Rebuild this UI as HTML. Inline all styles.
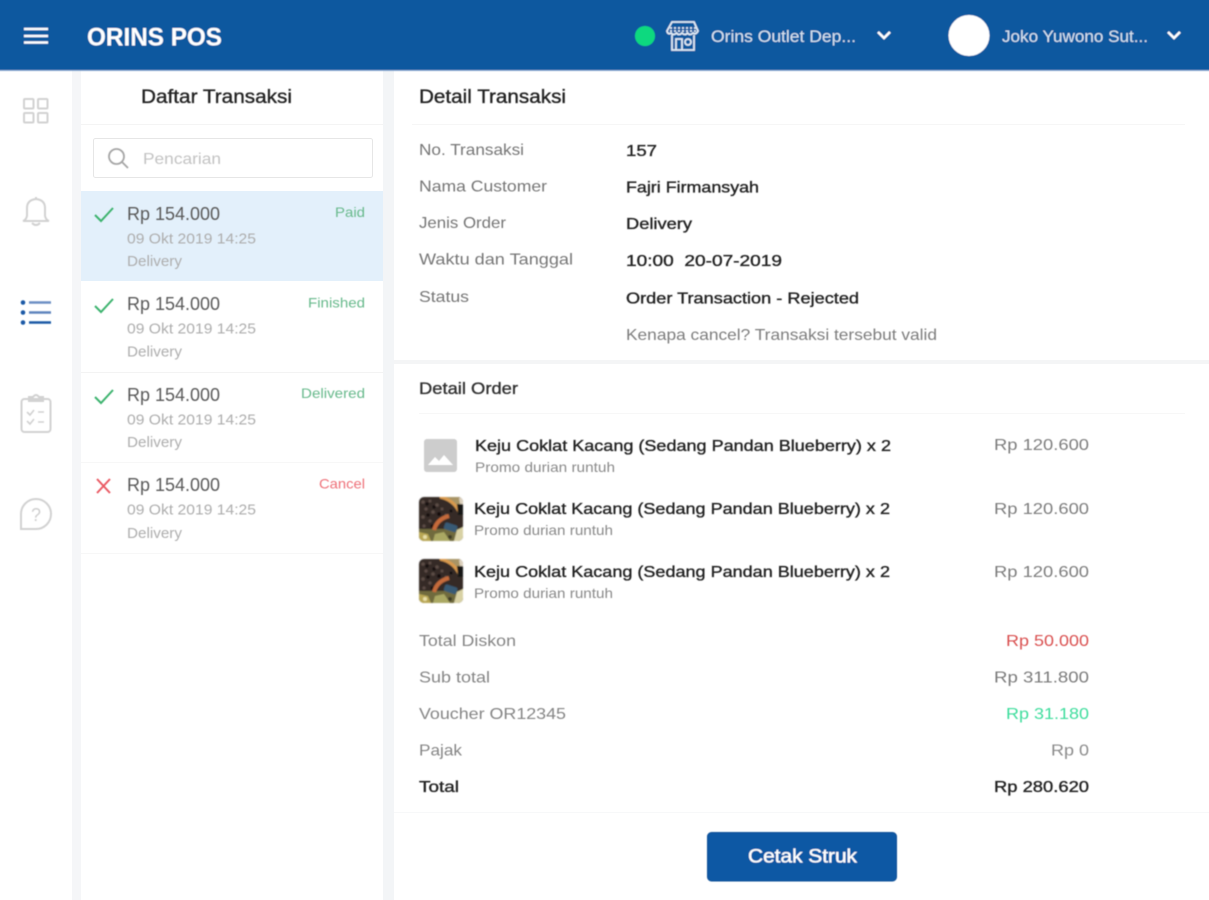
<!DOCTYPE html>
<html><head><meta charset="utf-8"><title>Orins POS</title>
<style>
html,body{margin:0;padding:0;background:#fff;width:1209px;height:900px;overflow:hidden}
svg{display:block;position:absolute;left:0;top:0}
text{font-family:"Liberation Sans",sans-serif}
.m{stroke:currentColor;stroke-width:.35}
</style></head><body>
<svg width="1209" height="900" viewBox="0 0 1209 900" xmlns="http://www.w3.org/2000/svg">
<defs><filter id="b" x="-2%" y="-2%" width="104%" height="104%"><feGaussianBlur stdDeviation="0.55"/></filter>
<filter id="p" x="-5%" y="-5%" width="110%" height="110%"><feGaussianBlur stdDeviation="0.8"/></filter>
<clipPath id="c"><rect x="0" y="0" width="44" height="44" rx="5"/></clipPath>
<g id="ph"><g clip-path="url(#c)">
<rect width="44" height="44" fill="#342a26"/>
<rect x="0" y="32" width="44" height="12" fill="#6f6a3c"/>
<path d="M0 35l9 2 3 7H0z" fill="#b8a652"/>
<path d="M20 0h24v10l-4 8q-4-12-20-18z" fill="#a89465"/>
<path d="M21 0q15 3 20 17" fill="none" stroke="#d99a4e" stroke-width="3"/>
<path d="M38 7h6v11h-5z" fill="#121317"/>
<path d="M40 1h4v6h-3z" fill="#ddd2bf"/>
<g fill="#5b4c44"><circle cx="4" cy="5" r="1.800"/><circle cx="11" cy="4" r="1.500"/><circle cx="18" cy="8" r="1.800"/><circle cx="7" cy="12" r="1.600"/><circle cx="14" cy="15" r="1.800"/><circle cx="23" cy="12" r="1.500"/><circle cx="4" cy="20" r="1.800"/><circle cx="11" cy="24" r="1.600"/><circle cx="27" cy="18" r="1.400"/><circle cx="5" cy="29" r="1.600"/></g>
<g fill="#17110f"><circle cx="8" cy="7" r="1.700"/><circle cx="15" cy="10" r="1.700"/><circle cx="20" cy="17" r="2"/><circle cx="9" cy="18" r="1.800"/><circle cx="32" cy="14" r="1.600"/><circle cx="13" cy="29" r="1.600"/></g>
<path d="M15 33q3-11 15-14" fill="none" stroke="#c56a3a" stroke-width="4"/>
<rect x="25" y="27" width="13" height="7" rx="2" fill="#385a74" transform="rotate(18 32 31)"/>
<path d="M38 33l6-3v14h-9z" fill="#d8d1a4"/>
<path d="M16 37l9-2 6 9H14z" fill="#aaa864"/>
<circle cx="31" cy="40" r="2" fill="#3c3a26"/><circle cx="6" cy="40" r="2" fill="#e8dfa8"/>
</g></g></defs>

<rect width="1209" height="900" fill="#fff"/>
<rect x="72" y="70" width="9" height="830" fill="#f5f6f8"/>
<rect x="383" y="70" width="11" height="830" fill="#f3f5f7"/>
<rect x="81" y="191" width="302" height="90" fill="#e3f0fb"/>
<rect x="81" y="124" width="302" height="1" fill="#f4f4f4"/>
<rect x="81" y="372" width="302" height="1" fill="#f3f3f3"/>
<rect x="81" y="462" width="302" height="1" fill="#f7f7f7"/>
<rect x="81" y="553" width="302" height="1" fill="#f7f7f7"/>
<rect x="412" y="124" width="773" height="1" fill="#f6f6f6"/>
<rect x="394" y="360" width="815" height="4" fill="#f4f5f6"/>
<rect x="419" y="413" width="766" height="1" fill="#f7f7f7"/>
<rect x="394" y="812" width="815" height="1" fill="#f7f8f9"/>
<rect x="93.500" y="138.500" width="279" height="39" rx="2" fill="#fff" stroke="#e6e6e6"/>

<g filter="url(#b)">
<rect x="-5" y="-5" width="1219" height="75" fill="#10599f"/>
<rect x="-5" y="70" width="1219" height="1" fill="#8fb0d6"/>
<path d="M24 29h24M24 36h24M24 42.500h24" stroke="#fff" stroke-width="2.600"/>
<text x="87" y="45.500" font-size="25" font-weight="700" fill="#fff" textLength="135" lengthAdjust="spacingAndGlyphs">ORINS POS</text>
<circle cx="645" cy="36" r="10" fill="#10d97f"/>
<g fill="none" stroke="#dfe9f4" stroke-width="1.800">
<path d="M672 22h22l4 9q-2 4-5 2-3 3-5.500 0-2.500 3-5.500 0-3 3-5.500 0-3 3-5.500 0-3 2-4-2z"/>
<path d="M672 35v15h22V35"/>
<path d="M676 50V39h6v11"/><circle cx="688" cy="42" r="3"/>
<path d="M670 28h26M670 31h26" stroke-dasharray="2 2"/>
</g>
<text x="711" y="42" font-size="16.500" fill="#d5e2f0" textLength="145" lengthAdjust="spacingAndGlyphs">Orins Outlet Dep...</text>
<path d="M878 32l6 6 6-6" fill="none" stroke="#fff" stroke-width="2.500"/>
<circle cx="969" cy="35.500" r="20.500" fill="#fff"/>
<text x="1002" y="42" font-size="16.500" fill="#d5e2f0" textLength="146" lengthAdjust="spacingAndGlyphs">Joko Yuwono Sut...</text>
<path d="M1168 32l6 6 6-6" fill="none" stroke="#fff" stroke-width="2.500"/>

<g fill="none" stroke="#d2d2d2" stroke-width="2">
<rect x="24" y="99" width="9.500" height="9.500" rx="1"/><rect x="38" y="99" width="9.500" height="9.500" rx="1"/>
<rect x="24" y="113" width="9.500" height="9.500" rx="1"/><rect x="38" y="113" width="9.500" height="9.500" rx="1"/>
<path d="M23 221h26q-3-1-4-5v-8q0-8-9-9-9 1-9 9v8q-1 4-4 5zM36 199v-2M32 223q4 4 8 0"/>
<rect x="21.500" y="399" width="29" height="33" rx="3"/><path d="M29 401v-4h4q3-4 6 0h4v4z"/>
<path d="M27 412l3 3 4-5M38 412h6M27 421l3 3 4-5M38 422h6" stroke-width="1.600"/>
<path d="M21 529V514a15 15 0 1 1 15 15z"/>
</g>
<text x="31" y="521" font-size="18" fill="#cfcfcf">?</text>
<g fill="#1d5aa6"><circle cx="23" cy="302.500" r="2.300"/><circle cx="23" cy="312.500" r="2.300"/><circle cx="23" cy="322.500" r="2.300"/></g>
<path d="M29 302.500h22" stroke="#6d8fc4" stroke-width="2.400"/><path d="M29 312.500h22" stroke="#5f84bd" stroke-width="2.400"/><path d="M29 322.500h22" stroke="#1d5aa6" stroke-width="2.400"/>

<text x="141" y="103" font-size="19" fill="#222" color="#222" class="m" textLength="151" lengthAdjust="spacingAndGlyphs">Daftar Transaksi</text>
<circle cx="116.500" cy="156.500" r="7.500" fill="none" stroke="#a5a5a5" stroke-width="1.800"/><path d="M122 162l6 6" stroke="#a5a5a5" stroke-width="1.800"/>
<text x="143" y="164" font-size="16" fill="#c2c2c2" textLength="78" lengthAdjust="spacingAndGlyphs">Pencarian</text>

<path d="M95 215l6 6 12-13" fill="none" stroke="#3db36e" stroke-width="2"/>
<path d="M95 306l6 6 12-13" fill="none" stroke="#3db36e" stroke-width="2"/>
<path d="M95 397l6 6 12-13" fill="none" stroke="#3db36e" stroke-width="2"/>
<path d="M97 479l13 14M110 479l-13 14" fill="none" stroke="#ea5a64" stroke-width="2"/>

<g fill="#5a5a5a" font-size="18">
<text x="127" y="220" textLength="93" lengthAdjust="spacingAndGlyphs">Rp 154.000</text>
<text x="127" y="310" textLength="93" lengthAdjust="spacingAndGlyphs">Rp 154.000</text>
<text x="127" y="401" textLength="93" lengthAdjust="spacingAndGlyphs">Rp 154.000</text>
<text x="127" y="491" textLength="93" lengthAdjust="spacingAndGlyphs">Rp 154.000</text>
</g>
<g fill="#adadad" font-size="15">
<text x="127" y="243.500" textLength="129" lengthAdjust="spacingAndGlyphs">09 Okt 2019 14:25</text>
<text x="127" y="333.500" textLength="129" lengthAdjust="spacingAndGlyphs">09 Okt 2019 14:25</text>
<text x="127" y="424.500" textLength="129" lengthAdjust="spacingAndGlyphs">09 Okt 2019 14:25</text>
<text x="127" y="514.500" textLength="129" lengthAdjust="spacingAndGlyphs">09 Okt 2019 14:25</text>
<text x="127" y="266" textLength="55" lengthAdjust="spacingAndGlyphs">Delivery</text>
<text x="127" y="356.500" textLength="55" lengthAdjust="spacingAndGlyphs">Delivery</text>
<text x="127" y="447" textLength="55" lengthAdjust="spacingAndGlyphs">Delivery</text>
<text x="127" y="538" textLength="55" lengthAdjust="spacingAndGlyphs">Delivery</text>
</g>
<g font-size="14" fill="#68b98c">
<text x="335" y="217" textLength="30" lengthAdjust="spacingAndGlyphs">Paid</text>
<text x="308" y="307.500" textLength="57" lengthAdjust="spacingAndGlyphs">Finished</text>
<text x="301" y="398" textLength="64" lengthAdjust="spacingAndGlyphs">Delivered</text>
<text x="319" y="488.500" fill="#ee7078" textLength="46" lengthAdjust="spacingAndGlyphs">Cancel</text>
</g>

<text x="419" y="103" font-size="19" fill="#222" color="#222" class="m" textLength="147" lengthAdjust="spacingAndGlyphs">Detail Transaksi</text>
<g font-size="16" fill="#767676">
<text x="419" y="155" textLength="105" lengthAdjust="spacingAndGlyphs">No. Transaksi</text>
<text x="419" y="191.500" textLength="128" lengthAdjust="spacingAndGlyphs">Nama Customer</text>
<text x="419" y="228" textLength="87" lengthAdjust="spacingAndGlyphs">Jenis Order</text>
<text x="419" y="264.500" textLength="154" lengthAdjust="spacingAndGlyphs">Waktu dan Tanggal</text>
<text x="419" y="302" textLength="50" lengthAdjust="spacingAndGlyphs">Status</text>
</g>
<g font-size="16" fill="#222" color="#222" class="m">
<text x="626" y="156" textLength="31" lengthAdjust="spacingAndGlyphs">157</text>
<text x="626" y="192.500" textLength="133" lengthAdjust="spacingAndGlyphs">Fajri Firmansyah</text>
<text x="626" y="229" textLength="66" lengthAdjust="spacingAndGlyphs">Delivery</text>
<text x="626" y="266" textLength="156" lengthAdjust="spacingAndGlyphs" xml:space="preserve">10:00  20-07-2019</text>
<text x="626" y="303.500" textLength="233" lengthAdjust="spacingAndGlyphs">Order Transaction - Rejected</text>
</g>
<text x="626" y="340" font-size="16" fill="#7d7d7d" textLength="311" lengthAdjust="spacingAndGlyphs">Kenapa cancel? Transaksi tersebut valid</text>
<text x="419" y="394" font-size="16.500" fill="#333" color="#333" class="m" textLength="99" lengthAdjust="spacingAndGlyphs">Detail Order</text>

<g font-size="16" fill="#222" color="#222" class="m">
<text x="475" y="451" textLength="416" lengthAdjust="spacingAndGlyphs">Keju Coklat Kacang (Sedang Pandan Blueberry) x 2</text>
<text x="474" y="514" textLength="416" lengthAdjust="spacingAndGlyphs">Keju Coklat Kacang (Sedang Pandan Blueberry) x 2</text>
<text x="474" y="577" textLength="416" lengthAdjust="spacingAndGlyphs">Keju Coklat Kacang (Sedang Pandan Blueberry) x 2</text>
</g>
<g font-size="14" fill="#8a8a8a">
<text x="475" y="472" textLength="140" lengthAdjust="spacingAndGlyphs">Promo durian runtuh</text>
<text x="474" y="535" textLength="139" lengthAdjust="spacingAndGlyphs">Promo durian runtuh</text>
<text x="474" y="598" textLength="139" lengthAdjust="spacingAndGlyphs">Promo durian runtuh</text>
</g>
<g font-size="16" fill="#7d7d7d">
<text x="994" y="450" textLength="95" lengthAdjust="spacingAndGlyphs">Rp 120.600</text>
<text x="994" y="514" textLength="95" lengthAdjust="spacingAndGlyphs">Rp 120.600</text>
<text x="994" y="577" textLength="95" lengthAdjust="spacingAndGlyphs">Rp 120.600</text>
</g>
<rect x="424" y="439" width="33" height="33" rx="3" fill="#cdcdcd"/>
<path d="M428 465l7-8 4 4 5-6 9 10z" fill="#fff"/>

<g font-size="16" fill="#858585">
<text x="419" y="646" textLength="97" lengthAdjust="spacingAndGlyphs">Total Diskon</text>
<text x="419" y="682.500" textLength="71" lengthAdjust="spacingAndGlyphs">Sub total</text>
<text x="419" y="719" textLength="147" lengthAdjust="spacingAndGlyphs">Voucher OR12345</text>
<text x="419" y="755.500" textLength="43" lengthAdjust="spacingAndGlyphs">Pajak</text>
</g>
<text x="419" y="792" font-size="16" fill="#222" color="#222" class="m" textLength="40" lengthAdjust="spacingAndGlyphs">Total</text>
<g font-size="16">
<text x="1006" y="646" fill="#d9504f" textLength="83" lengthAdjust="spacingAndGlyphs">Rp 50.000</text>
<text x="994" y="682.500" fill="#7a7a7a" textLength="95" lengthAdjust="spacingAndGlyphs">Rp 311.800</text>
<text x="1006" y="719" fill="#3edd9c" textLength="83" lengthAdjust="spacingAndGlyphs">Rp 31.180</text>
<text x="1051" y="755.500" fill="#8a8a8a" textLength="38" lengthAdjust="spacingAndGlyphs">Rp 0</text>
<text x="994" y="792" fill="#222" color="#222" class="m" textLength="95" lengthAdjust="spacingAndGlyphs">Rp 280.620</text>
</g>

<rect x="707.500" y="832.500" width="189" height="48.500" rx="4" fill="#1159a4" stroke="#0d4f97"/>
<text x="748" y="862.500" font-size="19" fill="#fff" color="#fff" class="m" textLength="109" lengthAdjust="spacingAndGlyphs">Cetak Struk</text>
</g>

<g filter="url(#p)">
<use href="#ph" x="419" y="497"/>
<use href="#ph" x="419" y="559"/>
</g>
</svg>
</body></html>
